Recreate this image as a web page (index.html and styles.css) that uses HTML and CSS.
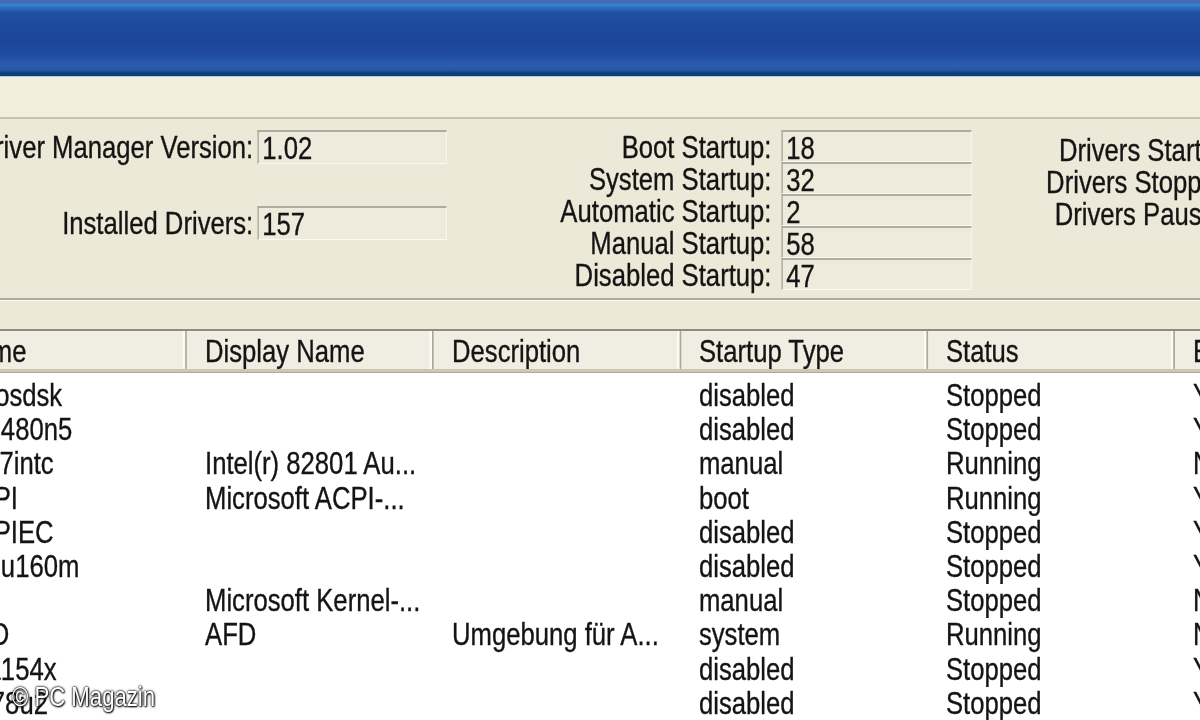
FILE: index.html
```html
<!DOCTYPE html>
<html>
<head>
<meta charset="utf-8">
<link rel="stylesheet" href="styles.css">
</head>
<body>
<div class="window">
  <div class="titlebar"></div>
  <div class="menubar"></div>
  <section class="stats">
    <div class="group g1">
      <span class="lbl big">Driver Manager Version:</span><span class="box big">1.02</span>
      <span class="lbl big">Installed Drivers:</span><span class="box big">157</span>
    </div>
    <div class="group g2">
      <span class="lbl">Boot Startup:</span><span class="box">18</span>
      <span class="lbl">System Startup:</span><span class="box">32</span>
      <span class="lbl">Automatic Startup:</span><span class="box">2</span>
      <span class="lbl">Manual Startup:</span><span class="box">58</span>
      <span class="lbl">Disabled Startup:</span><span class="box">47</span>
    </div>
    <div class="group g3">
      <span class="lbl">Drivers Started:</span>
      <span class="lbl">Drivers Stopped:</span>
      <span class="lbl">Drivers Paused:</span>
    </div>
  </section>
  <div class="listview">
    <div class="thead">
      <span class="th">Name</span>
      <span class="th">Display Name</span>
      <span class="th">Description</span>
      <span class="th">Startup Type</span>
      <span class="th">Status</span>
      <span class="th">Enabled</span>
    </div>
    <div class="tbody">
      <span>Abiosdsk</span><span></span><span></span><span>disabled</span><span>Stopped</span><span>Yes</span>
      <span>abp480n5</span><span></span><span></span><span>disabled</span><span>Stopped</span><span>Yes</span>
      <span>ac97intc</span><span>Intel(r) 82801 Au...</span><span></span><span>manual</span><span>Running</span><span>No</span>
      <span>ACPI</span><span>Microsoft ACPI-...</span><span></span><span>boot</span><span>Running</span><span>Yes</span>
      <span>ACPIEC</span><span></span><span></span><span>disabled</span><span>Stopped</span><span>Yes</span>
      <span>adpu160m</span><span></span><span></span><span>disabled</span><span>Stopped</span><span>Yes</span>
      <span>aec</span><span>Microsoft Kernel-...</span><span></span><span>manual</span><span>Stopped</span><span>No</span>
      <span>AFD</span><span>AFD</span><span>Umgebung für A...</span><span>system</span><span>Running</span><span>No</span>
      <span>aha154x</span><span></span><span></span><span>disabled</span><span>Stopped</span><span>Yes</span>
      <span>aic78u2</span><span></span><span></span><span>disabled</span><span>Stopped</span><span>Yes</span>
    </div>
  </div>
</div>
<div class="watermark">© PC Magazin</div>
</body>
</html>
```
FILE: styles.css
```css
html, body {
  margin: 0;
  padding: 0;
}
body {
  width: 1200px;
  height: 720px;
  overflow: hidden;
  position: relative;
  background: #ece9d8;
  font-family: "Liberation Sans", Arial, sans-serif;
  font-size: 31.3px;
  color: #141414;
}
/* the captured window is horizontally compressed: draw it wide, then squeeze */
.window {
  margin-left: -60px;
  width: 1620px;
  transform: scaleX(0.82);
  transform-origin: 0 0;
  -webkit-text-stroke: 0.35px #141414;
}
.titlebar {
  height: 76px;
  background: linear-gradient(to bottom, #4b6db5 0, #4068b4 2px, #3586d0 5px, #2a6cc0 8px, #1f4fa0 13px, #1c4698 40px, #1e4b9f 54px, #2a5cb0 65px, #2556a6 70px, #0f3f78 73px, #0c3a6e 76px);
}
.menubar {
  height: 40px;
  border-top: 1px solid #a8cfe8;
  background: #f3eddd;
  border-bottom: 2px solid #c6c2b1;
  box-shadow: 0 1px 0 #fbfaf4;
}
.stats {
  height: 179px;
  display: flex;
  border-bottom: 2px solid #aeab9b;
  box-shadow: 0 1px 0 #fbfaf4;
  background: #ece9d8;
}
.group {
  display: grid;
  align-content: start;
}
.lbl {
  text-align: right;
  white-space: nowrap;
  height: 32px;
  line-height: 35px;
}
.box {
  height: 32px;
  padding-left: 4px;
  box-sizing: border-box;
  background: #eeebdc;
  border-top: 2px solid #aeac9e;
  border-left: 2px solid #b4b2a4;
  border-bottom: 1px solid #fbfaf2;
  border-right: 1px solid #fbfaf2;
  line-height: 33px;
}
.g1 {
  width: 618px;
  padding-top: 11px;
  grid-template-columns: 387px 231px;
  row-gap: 42px;
}
.g1 .lbl {
  padding-right: 5px;
  height: 34px;
  line-height: 36px;
}
.box.big {
  height: 34px;
  line-height: 34px;
}
.g2 {
  width: 640px;
  padding-top: 11px;
  grid-template-columns: 408px 232px;
}
.g2 .lbl {
  padding-right: 12px;
}
.g3 {
  width: 324px;
  padding-top: 14px;
  grid-template-columns: 324px;
}
.listview {
  margin-top: 29px;
  border-top: 2px solid #8e8c80;
  background: #ffffff;
}
.thead {
  display: grid;
  grid-template-columns: repeat(6, 301.2px);
  height: 38px;
  background: #f0eee3;
  border-bottom: 3px solid #cbc7b6;
  box-shadow: 0 1px 0 #aeab9b;
}
.th {
  padding-left: 22px;
  padding-top: 3px;
  line-height: 35px;
  border-right: 2px solid #aca899;
  box-shadow: inset -3px 0 0 #fbfaf4;
  white-space: nowrap;
  overflow: hidden;
}
.tbody {
  display: grid;
  grid-template-columns: repeat(6, 301.2px);
  grid-auto-rows: 34.2px;
  padding-top: 7px;
  line-height: 34.2px;
}
.tbody span {
  padding-left: 22px;
  white-space: nowrap;
  overflow: hidden;
}
.watermark {
  position: absolute;
  left: 12px;
  top: 682px;
  font-size: 27px;
  line-height: 30px;
  color: #ffffff;
  transform: scaleX(0.82);
  transform-origin: 0 0;
  text-shadow: 0 0 2px #000, 0 0 3px #000, 1px 1px 2px #000;
}
```
